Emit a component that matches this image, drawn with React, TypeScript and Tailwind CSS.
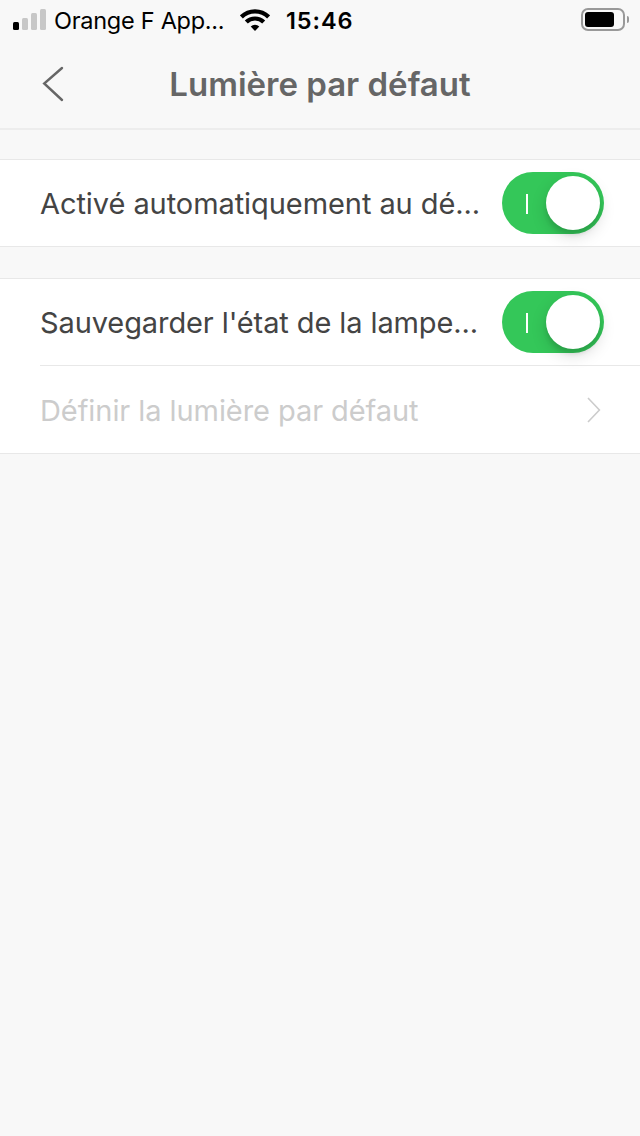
function StatusBar() {
  return (
    <div className="flex h-10 items-start text-black">
      <div className="flex h-[30px] items-end gap-[3px] pl-[13px]">
        <span className="h-2 w-1.5 rounded-[1.5px] bg-black" />
        <span className="h-3 w-1.5 rounded-[1.5px] bg-[#c7c7c7]" />
        <span className="h-[17px] w-1.5 rounded-[1.5px] bg-[#c7c7c7]" />
        <span className="h-[21px] w-1.5 rounded-[1.5px] bg-[#c7c7c7]" />
      </div>
      <span className="ml-2 w-[185px] text-[23.5px] leading-[41px] tracking-[-0.27px] whitespace-nowrap">Orange F App...</span>
      <svg className="mt-2 ml-[0.5px] h-6 w-[30px]" viewBox="0 0 30 24" fill="none" stroke="#000" strokeWidth="4.2">
        <path d="M1.4 8.9a19.3 19.3 0 0 1 27.2 0" />
        <path d="M6.3 14.1a12.3 12.3 0 0 1 17.4 0" />
        <path d="M15 23l-4.3-4.4a6.1 6.1 0 0 1 8.6 0z" fill="#000" stroke="none" />
      </svg>
      <span className="ml-[16.5px] text-[23.5px] leading-[41px] font-semibold tracking-[0.9px] whitespace-nowrap">15:46</span>
      <div className="mt-2 mr-[11px] ml-auto flex items-center gap-0.5">
        <div className="h-[23px] w-11 rounded-[7px] border-2 border-[#999] p-0.5">
          <div className="h-[15px] w-[29px] rounded-[3px] bg-black" />
        </div>
        <span className="h-[7px] w-0.5 rounded-r-full bg-[#999]" />
      </div>
    </div>
  );
}

function Toggle() {
  return (
    <div
      role="switch"
      aria-checked="true"
      className="flex h-[62px] w-[102px] shrink-0 items-center justify-between rounded-full bg-[#34c759] pr-1 pl-6"
    >
      <span className="mt-0.5 h-5 w-0.5 bg-white" />
      <span className="size-[54px] rounded-full bg-white shadow-[0_6px_16px_rgba(0,0,0,0.15),0_5px_4px_rgba(0,0,0,0.09)]" />
    </div>
  );
}

function Label({ text, className }: { text: string; className: string }) {
  return <span className={`pt-0.5 text-[29px] leading-10 whitespace-nowrap ${className}`}>{text}</span>;
}

export default function App() {
  return (
    <div className="h-[1136px] w-[640px] overflow-hidden bg-[#f8f8f8] font-['Inter','Liberation_Sans',sans-serif]">
      <header className="h-[130px] border-b-2 border-[#ededed]">
        <StatusBar />
        <div className="flex h-[88px] items-center px-[42px]">
          <svg className="h-9 w-6" viewBox="0 0 24 36" fill="none" stroke="#666" strokeWidth="2.4" strokeLinecap="round">
            <path d="M20 2L2.2 17.5L20 34" />
          </svg>
          <h1 className="mr-6 flex-1 text-center text-[33px] leading-10 font-semibold whitespace-nowrap text-[#666]">
            Lumière par défaut
          </h1>
        </div>
      </header>
      <main>
        <section className="mt-[29px] flex h-[88px] items-center justify-between border-y border-[#e8e8e8] bg-white pr-9 pl-10">
          <Label text="Activé automatiquement au dé..." className="tracking-[-0.07px] text-[#444]" />
          <Toggle />
        </section>
        <section className="mt-[31px] border-y border-[#e8e8e8] bg-white pl-10">
          <div className="flex h-[87px] items-center justify-between border-b border-[#e8e8e8] pr-9">
            <Label text="Sauvegarder l'état de la lampe..." className="tracking-[-0.1px] text-[#444]" />
            <Toggle />
          </div>
          <div className="flex h-[87px] items-center justify-between pr-[38px]">
            <Label text="Définir la lumière par défaut" className="tracking-[-0.07px] text-[#ccc]" />
            <svg className="h-[26px] w-4" viewBox="0 0 16 26" fill="none" stroke="#ccc" strokeWidth="1.6">
              <path d="M2 1L13.4 13L2 25" />
            </svg>
          </div>
        </section>
      </main>
    </div>
  );
}
